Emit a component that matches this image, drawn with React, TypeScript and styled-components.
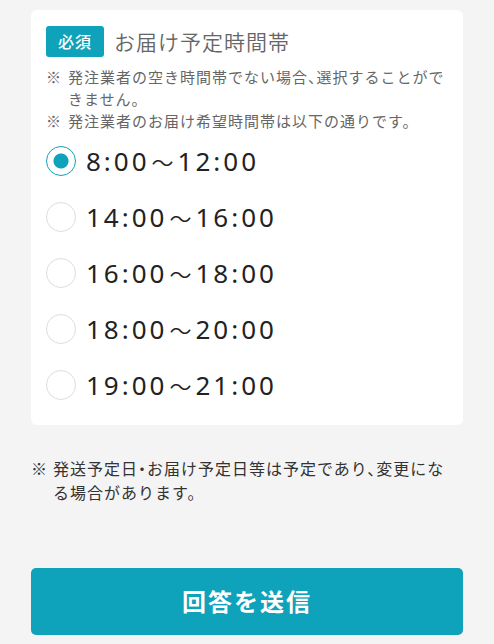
import React, { useState } from "react";
import styled, { createGlobalStyle } from "styled-components";

const GlobalStyle = createGlobalStyle`
  * {
    box-sizing: border-box;
  }
  body {
    margin: 0;
    background: #f4f4f4;
    color: #222;
    font-family: "Noto Sans CJK JP", sans-serif;
    font-feature-settings: "halt";
  }
`;

const Form = styled.form`
  padding: 10px 31px;
`;

const Card = styled.fieldset`
  margin: 0;
  padding: 16px 16px 20px 15px;
  min-width: 0;
  border: 0;
  border-radius: 6px;
  background: #fff;
`;

const Legend = styled.legend`
  float: left;
  width: 100%;
  display: flex;
  align-items: center;
  gap: 10px;
  padding: 0;
  margin-bottom: 9px;
  color: #666;
  font-size: 21px;
  font-weight: 350;
  line-height: 31px;
  letter-spacing: 1px;
`;

const Badge = styled.span`
  padding: 0 12px;
  border-radius: 3px;
  background: #0fa2bb;
  color: #fff;
  font-size: 16px;
  font-weight: 500;
  letter-spacing: 1px;
`;

const Notes = styled.ul<{ $large?: boolean }>`
  clear: both;
  list-style: none;
  margin: ${(p) => (p.$large ? "31px 0 64px" : "0 0 9px")};
  padding: ${(p) => (p.$large ? "0 8px 0 0" : "0")};
  color: ${(p) => (p.$large ? "#333" : "#666")};
  font-size: ${(p) => (p.$large ? "16px" : "15px")};
  line-height: ${(p) => (p.$large ? "24px" : "22px")};
  letter-spacing: 1px;
`;

const Note = styled.li`
  display: grid;
  grid-template-columns: 16px 1fr;
  column-gap: 6px;
`;

const Options = styled.div`
  display: grid;
  gap: 16px;
`;

const Option = styled.label`
  display: flex;
  align-items: center;
  gap: 10px;
  color: #222;
  font-family: "Noto Sans", "Noto Sans CJK JP", sans-serif;
  font-size: 26px;
  line-height: 40px;
  letter-spacing: 3px;
  cursor: pointer;
`;

const Tilde = styled.span`
  font-family: "Noto Sans CJK JP", sans-serif;
  font-size: 22px;
  font-weight: 350;
  line-height: 1;
  padding: 0 1px 0 2px;
`;

const Radio = styled.input`
  appearance: none;
  flex: none;
  width: 30px;
  height: 30px;
  margin: 0;
  border: 1px solid #ddd;
  border-radius: 50%;
  background: #fff;
  cursor: pointer;

  &:checked {
    border-color: #0fa2bb;
    background: radial-gradient(circle, #0fa2bb 7px, #fff 8px);
  }
`;

const Submit = styled.button`
  display: block;
  width: 100%;
  padding: 15px 16px 17px;
  border: 0;
  border-radius: 5px;
  background: #0fa2bb;
  color: #fff;
  font: inherit;
  font-size: 24px;
  font-weight: 700;
  line-height: 35px;
  letter-spacing: 2px;
  cursor: pointer;
`;

const slots = [
  ["8:00", "12:00"],
  ["14:00", "16:00"],
  ["16:00", "18:00"],
  ["18:00", "20:00"],
  ["19:00", "21:00"],
];

const cardNotes = [
  "発注業者の空き時間帯でない場合、選択することができません。",
  "発注業者のお届け希望時間帯は以下の通りです。",
];

export default function App() {
  const [selected, setSelected] = useState(slots[0][0]);

  return (
    <>
      <GlobalStyle />
      <Form onSubmit={(e) => e.preventDefault()}>
        <Card>
          <Legend>
            <Badge>必須</Badge>
            お届け予定時間帯
          </Legend>
          <Notes>
            {cardNotes.map((text) => (
              <Note key={text}>
                <span>※</span>
                <span>{text}</span>
              </Note>
            ))}
          </Notes>
          <Options>
            {slots.map(([start, end]) => (
              <Option key={start}>
                <Radio
                  type="radio"
                  name="slot"
                  value={start}
                  checked={selected === start}
                  onChange={() => setSelected(start)}
                />
                <span>
                  {start}
                  <Tilde>～</Tilde>
                  {end}
                </span>
              </Option>
            ))}
          </Options>
        </Card>
        <Notes $large>
          <Note>
            <span>※</span>
            <span>発送予定日・お届け予定日等は予定であり、変更になる場合があります。</span>
          </Note>
        </Notes>
        <Submit type="submit">回答を送信</Submit>
      </Form>
    </>
  );
}
